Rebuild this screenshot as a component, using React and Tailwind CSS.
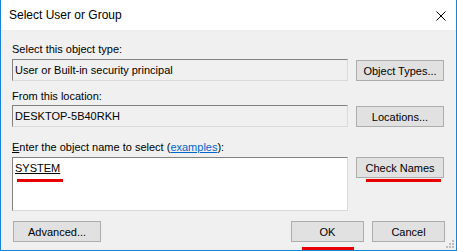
import React from 'react';

// Windows "Select User or Group" dialog
function Button({ children, className = '' }) {
  return (
    <div
      className={`flex items-center justify-center h-[21px] bg-[#e1e1e1] border border-[#adadad] text-black ${className}`}
    >
      {children}
    </div>
  );
}

function Field({ children, className = '' }) {
  return (
    <div
      className={`border-t border-l border-[#828282] border-b border-r border-b-[#dadada] border-r-[#dadada] px-[2px] ${className}`}
    >
      {children}
    </div>
  );
}

export default function App() {
  return (
    <div
      className="relative w-[457px] h-[251px] bg-[#f0f0f0] border-x border-b border-[#1883d7] flex flex-col text-[11px] leading-[16px] text-black"
      style={{ fontFamily: '"Liberation Sans", Arial, sans-serif' }}
    >
      <div className="h-[30px] bg-white flex items-center justify-between pl-[8px] pr-[10px]">
        <span className="text-[12px]">Select User or Group</span>
        <svg width="10" height="10" viewBox="0 0 10 10" className="mt-[1px]">
          <path d="M0.5 0.5 L9.5 9.5 M9.5 0.5 L0.5 9.5" stroke="#000" strokeWidth="1" />
        </svg>
      </div>

      <div className="flex flex-col px-[11px] pt-[11px]">
        <div>Select this object type:</div>
        <div className="flex gap-[8px] mt-[2px]">
          <Field className="w-[336px] h-[22px] flex items-center bg-[#f0f0f0]">
            User or Built-in security principal
          </Field>
          <Button className="w-[88px] mt-[1px]">Object Types...</Button>
        </div>

        <div className="mt-[7px]">From this location:</div>
        <div className="flex gap-[8px] mt-[1px]">
          <Field className="w-[336px] h-[22px] flex items-center bg-[#f0f0f0]">
            DESKTOP-5B40RKH
          </Field>
          <Button className="w-[88px] mt-[1px]">Locations...</Button>
        </div>

        <div className="mt-[12px]">
          <span className="underline">E</span>nter the object name to select (
          <span className="text-[#0066cc] underline">examples</span>):
        </div>
        <div className="flex gap-[8px] mt-[2px]">
          <Field className="w-[336px] h-[54px] bg-white pt-[2px]">
            <div className="flex flex-col items-start">
              <span className="underline">SYSTEM</span>
              <div className="ml-[2px] mt-[3px] w-[46px] h-[3px] bg-[#e60000]" />
            </div>
          </Field>
          <div className="flex flex-col">
            <Button className="w-[88px]">Check Names</Button>
            <div className="ml-[10px] mt-[1px] w-[75px] h-[3px] bg-[#e60000]" />
          </div>
        </div>

        <div className="flex items-start mt-[10px]">
          <Button className="w-[88px] ml-[1px]">Advanced...</Button>
          <div className="ml-auto flex gap-[8px]">
            <div className="flex flex-col">
              <Button className="w-[73px]">OK</Button>
              <div className="ml-[11px] mt-[5px] w-[52px] h-[3px] bg-[#e60000]" />
            </div>
            <Button className="w-[73px]">Cancel</Button>
          </div>
        </div>
      </div>

      <svg width="10" height="10" viewBox="0 0 10 10" className="absolute right-[1px] bottom-[1px]">
        <rect x="7" y="1" width="2" height="2" fill="#bdbdbd" />
        <rect x="4" y="4" width="2" height="2" fill="#bdbdbd" />
        <rect x="7" y="4" width="2" height="2" fill="#bdbdbd" />
        <rect x="1" y="7" width="2" height="2" fill="#bdbdbd" />
        <rect x="4" y="7" width="2" height="2" fill="#bdbdbd" />
        <rect x="7" y="7" width="2" height="2" fill="#bdbdbd" />
      </svg>
    </div>
  );
}
